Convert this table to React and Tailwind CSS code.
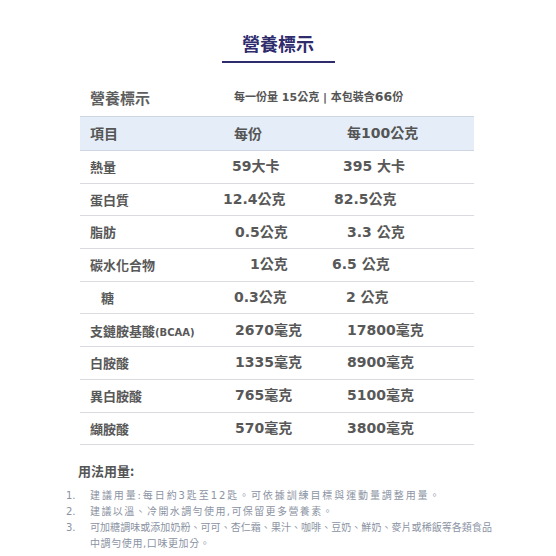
import React from 'react';

const rows = [
  { name: '熱量', a: '59大卡', b: '395 大卡', pa: 'pl-[10px]', pb: 'pl-[11px]' },
  { name: '蛋白質', a: '12.4公克', b: '82.5公克', pa: 'pl-[1px]', pb: 'pl-[2px]' },
  { name: '脂肪', a: '0.5公克', b: '3.3 公克', pa: 'pl-[13px]', pb: 'pl-[15px]' },
  { name: '碳水化合物', a: '1公克', b: '6.5 公克', pa: 'pl-[28px]', pb: 'pl-0' },
  { name: '糖', a: '0.3公克', b: '2 公克', pa: 'pl-[12px]', pb: 'pl-[14px]', indent: true },
  { name: '支鏈胺基酸', extra: '(BCAA)', a: '2670毫克', b: '17800毫克', pa: 'pl-[13px]', pb: 'pl-[15px]' },
  { name: '白胺酸', a: '1335毫克', b: '8900毫克', pa: 'pl-[13px]', pb: 'pl-[15px]' },
  { name: '異白胺酸', a: '765毫克', b: '5100毫克', pa: 'pl-[13px]', pb: 'pl-[15px]' },
  { name: '纈胺酸', a: '570毫克', b: '3800毫克', pa: 'pl-[13px]', pb: 'pl-[15px]' },
];

const usage = [
  ['1.', '建議用量:每日約3匙至12匙。可依據訓練目標與運動量調整用量。', 'tracking-[1.9px]'],
  ['2.', '建議以溫、冷開水調勻使用,可保留更多營養素。', 'tracking-[1.4px]'],
  ['3.', '可加糖調味或添加奶粉、可可、杏仁霜、果汁、咖啡、豆奶、鮮奶、麥片或稀飯等各類食品', 'tracking-[0.05px]'],
  ['', '中調勻使用,口味更加分。', 'tracking-[0.6px]'],
];

const num = { fontFamily: '"DejaVu Sans", "Noto Sans CJK TC", sans-serif' };

const App = () => {
  return (
    <div
      className="w-[556px] h-[556px] bg-white overflow-hidden text-[#555]"
      style={{ fontFamily: '"Noto Sans CJK TC", "Noto Sans", sans-serif' }}
    >
      <div className="flex flex-col items-center pt-[32px]">
        <h1 className="text-[18px] leading-[22px] font-bold text-[#2f2c6e]">營養標示</h1>
        <div className="mt-[7px] w-[113px] h-[2px] bg-[#2f2c6e]" />
      </div>

      <div className="ml-[80px] w-[394px]">
        <div className="mt-[24px] pb-[8px] border-b border-[#cdd6e2] grid grid-cols-[142px_1fr] items-center">
          <div className="pl-[10px] text-[15px] leading-[20px] font-bold text-[#5e5e5e]">營養標示</div>
          <div className="pl-[12px] text-[11px] leading-[20px] font-bold text-[#555]" style={num}>
            每一份量 15公克 | 本包裝含<span className="text-[12.5px]">66</span>份
          </div>
        </div>

        <div className="h-[34px] bg-[#e5eef8] border-b border-[#cdd6e2] grid grid-cols-[142px_110px_1fr] items-center text-[14px] font-bold text-[#555]">
          <div className="pl-[10px]">項目</div>
          <div className="pl-[12px]">每份</div>
          <div className="pl-[15px]" style={num}>每100公克</div>
        </div>

        {rows.map((r) => (
          <div
            key={r.name}
            className="h-[32.7px] border-b border-[#d9dbe0] grid grid-cols-[142px_110px_1fr] items-center text-[14px] font-bold text-[#585858]"
          >
            <div className={`${r.indent ? 'pl-[21px]' : 'pl-[10px]'} text-[13px] whitespace-nowrap`}>
              {r.name}
              {r.extra && <span className="text-[10px]" style={num}>{r.extra}</span>}
            </div>
            <div className={`${r.pa} whitespace-nowrap`} style={num}>{r.a}</div>
            <div className={`${r.pb} whitespace-nowrap`} style={num}>{r.b}</div>
          </div>
        ))}
      </div>

      <div className="ml-[78px] mt-[17px] text-[13px] leading-[18px] font-bold text-[#555]">用法用量:</div>
      <div className="mt-[8px] text-[10px] leading-[16px] text-[#8b93a3]" style={num}>
        {usage.map(([n, t, tr], i) => (
          <div key={i} className="flex">
            <span className="w-[24px] pl-[66px] box-content">{n}</span>
            <span className={`whitespace-nowrap ${tr}`}>{t}</span>
          </div>
        ))}
      </div>
    </div>
  );
};

export default App;
